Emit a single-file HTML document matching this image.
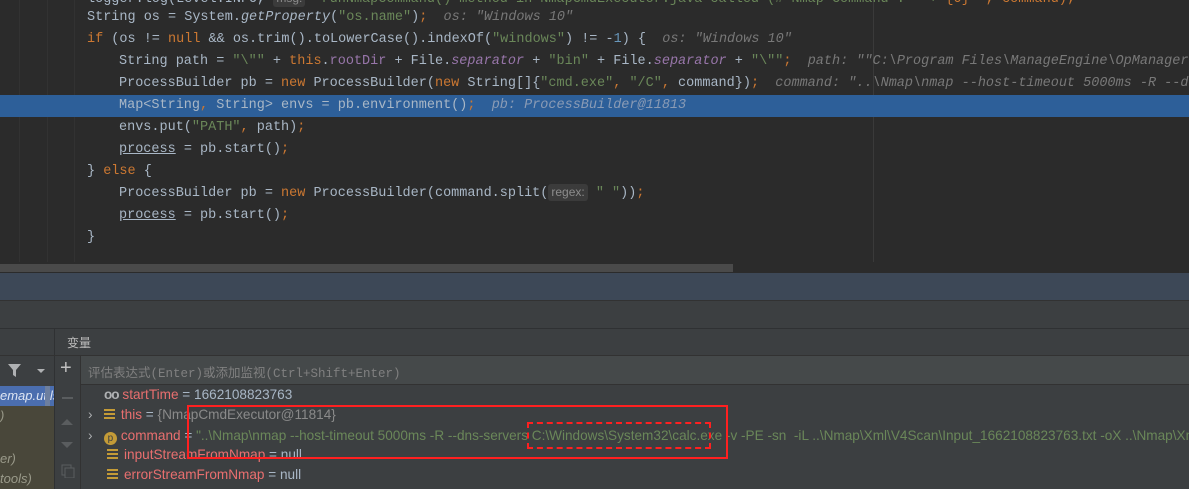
<!DOCTYPE html>
<html><head><meta charset="utf-8"><style>
*{margin:0;padding:0;box-sizing:border-box}
body{width:1189px;height:489px;overflow:hidden;background:#2b2b2b;position:relative;font-family:"Liberation Sans","Noto Sans CJK SC",sans-serif}
.code{position:absolute;left:0;top:0;width:1189px;height:272px;background:#2b2b2b;font-family:"Liberation Mono","DejaVu Sans Mono",monospace;font-size:13.5px;color:#a9b7c6}
.ln{position:absolute;left:0;height:22px;line-height:22px;white-space:pre;width:1189px}
.hl{background:#2d5f99}
.k{color:#cc7832}.s{color:#6a8759}.f{color:#9876aa}.i{font-style:italic}.c{color:#787878;font-style:italic}.u{text-decoration:underline}
.gl{position:absolute;top:0;width:1px;height:262px;background:#323232}
.hint{display:inline-block;background:#3b3b3b;color:#8c8c8c;font-family:"Liberation Sans",sans-serif;font-size:12px;border-radius:3px;padding:0 3px;line-height:17px}
.abs{position:absolute}
.var{position:absolute;left:88px;height:20px;line-height:20px;font-size:13.6px;white-space:nowrap;color:#a9b7c6}
.n{color:#e96f6f}
.g{color:#6a8759}
.fi{display:inline-block;width:11px;height:11px;background:repeating-linear-gradient(#c49b37 0 2px,transparent 2px 4px);vertical-align:-1px;margin:0 6px 0 0}
</style></head><body>
<div class="code">
<div class="gl" style="left:19px"></div><div class="gl" style="left:47px"></div><div class="gl" style="left:74px"></div>
<div class="gl" style="left:873px;background:#3a3a3a"></div>
<div class="ln" style="top:-11px;left:87px;width:auto"><span style="color:#a9b7c6">logger.log(Level.INFO, </span><span class="hint">msg:</span><span class="s"> "runNmapCommand() method in NmapCmdExecutor.java called (# Nmap Command : " + </span><span class="k">{0} ", command);</span></div>
<div class="ln" style="top:7px;padding-left:87px">String os = System.<span class="i">getProperty</span>(<span class="s">"os.name"</span>)<span class="k">;</span>  <span class="c">os: "Windows 10"</span></div>
<div class="ln" style="top:29px;padding-left:87px"><span class="k">if</span> (os != <span class="k">null</span> &amp;&amp; os.trim().toLowerCase().indexOf(<span class="s">"windows"</span>) != -<span style="color:#6897bb">1</span>) {  <span class="c">os: "Windows 10"</span></div>
<div class="ln" style="top:51px;padding-left:119px">String path = <span class="s">"\""</span> + <span class="k">this</span>.<span class="f">rootDir</span> + File.<span class="f i">separator</span> + <span class="s">"bin"</span> + File.<span class="f i">separator</span> + <span class="s">"\""</span><span class="k">;</span>  <span class="c">path: ""C:\Program Files\ManageEngine\OpManager\ </span></div>
<div class="ln" style="top:73px;padding-left:119px">ProcessBuilder pb = <span class="k">new</span> ProcessBuilder(<span class="k">new</span> String[]{<span class="s">"cmd.exe"</span><span class="k">,</span> <span class="s">"/C"</span><span class="k">,</span> command})<span class="k">;</span>  <span class="c">command: "..\Nmap\nmap --host-timeout 5000ms -R --dns</span></div>
<div class="ln hl" style="top:95px;padding-left:119px">Map&lt;String<span class="k">,</span> String&gt; envs = pb.environment()<span class="k">;</span>  <span class="c" style="color:#8a9bb5">pb: ProcessBuilder@11813</span></div>
<div class="ln" style="top:117px;padding-left:119px">envs.put(<span class="s">"PATH"</span><span class="k">,</span> path)<span class="k">;</span></div>
<div class="ln" style="top:139px;padding-left:119px"><span class="u">process</span> = pb.start()<span class="k">;</span></div>
<div class="ln" style="top:161px;padding-left:87px">} <span class="k">else</span> {</div>
<div class="ln" style="top:183px;padding-left:119px">ProcessBuilder pb = <span class="k">new</span> ProcessBuilder(command.split(<span class="hint">regex:</span> <span class="s">" "</span>))<span class="k">;</span></div>
<div class="ln" style="top:205px;padding-left:119px"><span class="u">process</span> = pb.start()<span class="k">;</span></div>
<div class="ln" style="top:227px;padding-left:87px">}</div>
<div class="abs" style="left:0;top:264px;width:733px;height:8px;background:#4a4a4a"></div>
</div>
<div class="abs" style="left:0;top:272px;width:1189px;height:28px;background:#3d4857;border-top:1px solid #2b2b2b"></div>
<div class="abs" style="left:0;top:300px;width:1189px;height:28px;background:#3c3f41;border-top:1px solid #323232"></div>
<div class="abs" style="left:0;top:328px;width:1189px;height:161px;background:#3c3f41;border-top:1px solid #2f3133"></div>
<div class="abs" style="left:54px;top:328px;width:1px;height:161px;background:#2f3133"></div>
<div class="abs" style="left:67px;top:334px;font-size:12px;color:#bbbbbb">变量</div>
<div class="abs" style="left:0;top:355px;width:1189px;height:1px;background:#323232"></div>
<div class="abs" style="left:80px;top:356px;width:1px;height:133px;background:#323232"></div>
<div class="abs" style="left:81px;top:356px;width:1108px;height:29px;background:#45494a;border-bottom:1px solid #323232"></div>
<div class="abs" style="left:88px;top:362px;font-size:12.5px;color:#808080;font-family:'Liberation Mono','Noto Sans CJK SC',monospace">评估表达式(Enter)或添加监视(Ctrl+Shift+Enter)</div>
<div class="abs" style="left:81px;top:385px;width:1108px;height:104px;background:#3c3f41"></div>
<svg class="abs" style="left:8px;top:363px" width="40" height="16"><path d="M0 1h13l-5 6v7l-3-2v-5z" fill="#afb1b3"/><path d="M29 6h8l-4 4z" fill="#afb1b3"/></svg>
<div class="abs" style="left:0;top:386px;width:54px;height:20px;background:#4b6eaf;color:#dfe6f3;font-style:italic;font-size:13px;line-height:20px;white-space:nowrap;overflow:hidden">emap.utils</div>
<div class="abs" style="left:0;top:406px;width:54px;height:83px;background:#49473a"></div>
<div class="abs" style="left:45px;top:386px;width:5px;height:20px;background:#6d7f9f"></div>
<div class="abs" style="left:0;top:408px;font-style:italic;font-size:13px;color:#9a9a8a">)</div>
<div class="abs" style="left:0;top:451px;font-style:italic;font-size:13px;color:#9a9a8a">er)</div>
<div class="abs" style="left:0;top:471px;font-style:italic;font-size:13px;color:#9a9a8a">tools)</div>
<div class="abs" style="left:60px;top:358px;font-size:20px;color:#c0c0c0;line-height:20px">+</div>
<div class="abs" style="left:62px;top:397px;width:11px;height:2px;background:#5a5d5f"></div>
<svg class="abs" style="left:60px;top:418px" width="16" height="60"><path d="M1 7l6-6 6 6z M1 24l6 6 6-6z" fill="#5a5d5f"/><rect x="2" y="47" width="9" height="10" fill="none" stroke="#5a5d5f"/><rect x="5" y="50" width="9" height="10" fill="#3c3f41" stroke="#5a5d5f"/></svg>
<div class="var" style="left:104px;top:385px"><span style="color:#afb1b3;font-weight:bold;letter-spacing:-1px">oo</span> <span class="n">startTime</span> = 1662108823763</div>
<div class="var" style="top:405px"><span style="color:#afb1b3">›</span>&nbsp;&nbsp;&nbsp;<span class="fi"></span><span class="n">this</span> = <span style="color:#8a8a8a">{NmapCmdExecutor@11814}</span></div>
<div class="var" style="top:426px"><span style="color:#afb1b3">›</span>&nbsp;&nbsp;&nbsp;<span style="display:inline-block;width:13px;height:13px;border-radius:50%;background:#c49b37;color:#3c3f41;font-size:10px;line-height:13px;text-align:center;vertical-align:-1px;margin-right:4px">p</span><span class="n">command</span> = <span class="g">"..\Nmap\nmap --host-timeout 5000ms -R --dns-servers C:\Windows\System32\calc.exe -v -PE -sn &nbsp;-iL ..\Nmap\Xml\V4Scan\Input_1662108823763.txt -oX ..\Nmap\Xml\V4S</span></div>
<div class="var" style="left:107px;top:445px"><span class="fi"></span><span class="n">inputStreamFromNmap</span> = null</div>
<div class="var" style="left:107px;top:465px"><span class="fi"></span><span class="n">errorStreamFromNmap</span> = null</div>
<div class="abs" style="left:187px;top:405px;width:541px;height:54px;border:2px solid #ff2020"></div>
<div class="abs" style="left:527px;top:422px;width:184px;height:27px;border:2px dashed #ff2020"></div>
</body></html>
